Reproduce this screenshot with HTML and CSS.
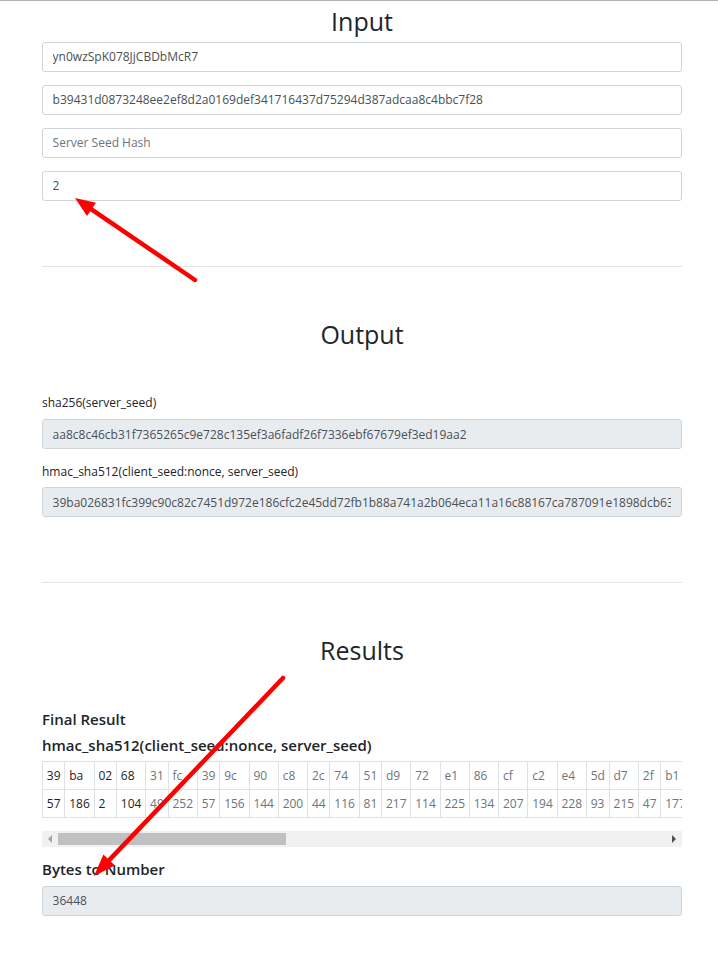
FILE: index.html
```html
<!DOCTYPE html>
<html lang="en">
<head>
    <meta charset="UTF-8">
    <meta name="viewport" content="width=device-width, initial-scale=1.0">
    <title>Provably Fair Verifier</title>
    <link rel="stylesheet" href="styles.css">
</head>
<body>
    <div class="container">
        <section class="input-section">
            <h2>Input</h2>
            <input type="text" class="form-control" id="clientSeed" value="yn0wzSpK078JjCBDbMcR7">
            <input type="text" class="form-control" id="serverSeed" value="b39431d0873248ee2ef8d2a0169def341716437d75294d387adcaa8c4bbc7f28">
            <input type="text" class="form-control" id="serverSeedHash" placeholder="Server Seed Hash">
            <input type="text" class="form-control" id="nonce" value="2">
        </section>

        <hr>

        <section>
            <h2>Output</h2>
            <div class="fields">
                <div class="form-group">
                    <label for="sha256">sha256(server_seed)</label>
                    <input type="text" class="form-control" id="sha256" readonly value="aa8c8c46cb31f7365265c9e728c135ef3a6fadf26f7336ebf67679ef3ed19aa2">
                </div>
                <div class="form-group">
                    <label for="hmac">hmac_sha512(client_seed:nonce, server_seed)</label>
                    <input type="text" class="form-control" id="hmac" readonly value="39ba026831fc399c90c82c7451d972e186cfc2e45dd72fb1b88a741a2b064eca11a16c88167ca787091e1898dcb63f0a52c7e81d94b06a2e5f7c318d40b9a6e2">
                </div>
            </div>
        </section>

        <hr>

        <section>
            <h2>Results</h2>
            <div class="fields">
                <h5>Final Result</h5>
                <h5>hmac_sha512(client_seed:nonce, server_seed)</h5>
                <div class="table-scroll" id="tableScroll">
                    <table class="bytes-table">
                        <tr id="hexRow"></tr>
                        <tr id="decRow"></tr>
                    </table>
                </div>
                <div class="scrollbar">
                    <span class="sb-btn"><span class="sb-arrow left"></span></span>
                    <div class="sb-track" id="sbTrack"><div class="sb-thumb" id="sbThumb"></div></div>
                    <span class="sb-btn"><span class="sb-arrow right"></span></span>
                </div>
                <h5>Bytes to Number</h5>
                <input type="text" class="form-control" id="result" readonly value="36448">
            </div>
        </section>
    </div>

    <!-- annotation arrows -->
    <svg class="arrows" width="718" height="978" viewBox="0 0 718 978">
        <line x1="195" y1="280" x2="91.5" y2="209.3" stroke="#f00" stroke-width="4.5" stroke-linecap="round"/>
        <polygon points="75,198 96,202.7 87,215.9" fill="#f00"/>
        <line x1="283" y1="678" x2="109.2" y2="860.1" stroke="#f00" stroke-width="4.5" stroke-linecap="round"/>
        <polygon points="94,876 103.4,854.6 115,865.6" fill="#f00"/>
    </svg>

    <script>
        // Fill the byte table from the hmac output
        const hex = document.getElementById('hmac').value;
        const hexRow = document.getElementById('hexRow');
        const decRow = document.getElementById('decRow');

        for (let i = 0; i < hex.length; i += 2) {
            const pair = hex.substr(i, 2);
            const used = i < 8 ? ' class="used"' : '';
            hexRow.insertAdjacentHTML('beforeend', `<td${used}>${pair}</td>`);
            decRow.insertAdjacentHTML('beforeend', `<td${used}>${parseInt(pair, 16)}</td>`);
        }

        // Size the scrollbar thumb to the visible part of the table
        const tableScroll = document.getElementById('tableScroll');
        const sbTrack = document.getElementById('sbTrack');
        const sbThumb = document.getElementById('sbThumb');
        const ratio = tableScroll.clientWidth / tableScroll.scrollWidth;
        sbThumb.style.width = Math.round(sbTrack.clientWidth * ratio) + 'px';
    </script>
</body>
</html>
```

FILE: styles.css
```css
* {
    box-sizing: border-box;
}
body {
    margin: 0;
    border-top: 1px solid #b4b4b4;
    font-family: 'Open Sans', 'Noto Sans', sans-serif;
    font-size: 12px;
    line-height: 19.2px;
    color: #212529;
    background-color: #fff;
}
.container {
    width: 640px;
    margin-left: 42px;
}
h2 {
    font-size: 25px;
    font-weight: 400;
    line-height: 30.72px;
    text-align: center;
    margin: 0 0 6px;
}
.input-section h2 {
    margin: 5px 0 5px;
}
h5 {
    font-size: 15px;
    font-weight: 600;
    line-height: 19.2px;
    margin: 0 0 6.4px;
}
hr {
    border: 0;
    border-top: 1px solid #e5e5e5;
    margin: 65px 0 52px;
}
.fields {
    margin-top: 44px;
}
label {
    display: block;
    margin-bottom: 6.4px;
}
.form-control {
    display: block;
    width: 100%;
    height: 30px;
    padding: 0 9.6px;
    margin: 0 0 13px;
    font-family: inherit;
    font-size: 12px;
    color: #495057;
    background-color: #fff;
    border: 1px solid #ced4da;
    border-radius: 3px;
}
.form-control::placeholder {
    color: #6c757d;
}
.form-control[readonly] {
    background-color: #e9ecef;
}
.form-group .form-control {
    margin-bottom: 12.8px;
}
.table-scroll {
    overflow: hidden;
}
.bytes-table {
    border-collapse: collapse;
    margin-bottom: 13px;
    white-space: nowrap;
}
.bytes-table td {
    border: 1px solid #dee2e6;
    padding: 3.84px;
    color: #6c757d;
}
.bytes-table td.used {
    color: #212529;
}
.scrollbar {
    display: flex;
    height: 16px;
    margin-bottom: 13px;
    background-color: #f1f1f1;
}
.sb-btn {
    display: flex;
    align-items: center;
    justify-content: center;
    width: 16px;
    flex-shrink: 0;
}
.sb-arrow {
    width: 0;
    height: 0;
    border-top: 4px solid transparent;
    border-bottom: 4px solid transparent;
}
.sb-arrow.left {
    border-right: 4px solid #a3a3a3;
}
.sb-arrow.right {
    border-left: 4px solid #505050;
}
.sb-track {
    flex: 1;
    padding: 2px 0;
}
.sb-thumb {
    height: 12px;
    background-color: #c1c1c1;
}
.arrows {
    position: absolute;
    top: 0;
    left: 0;
    pointer-events: none;
}
```
